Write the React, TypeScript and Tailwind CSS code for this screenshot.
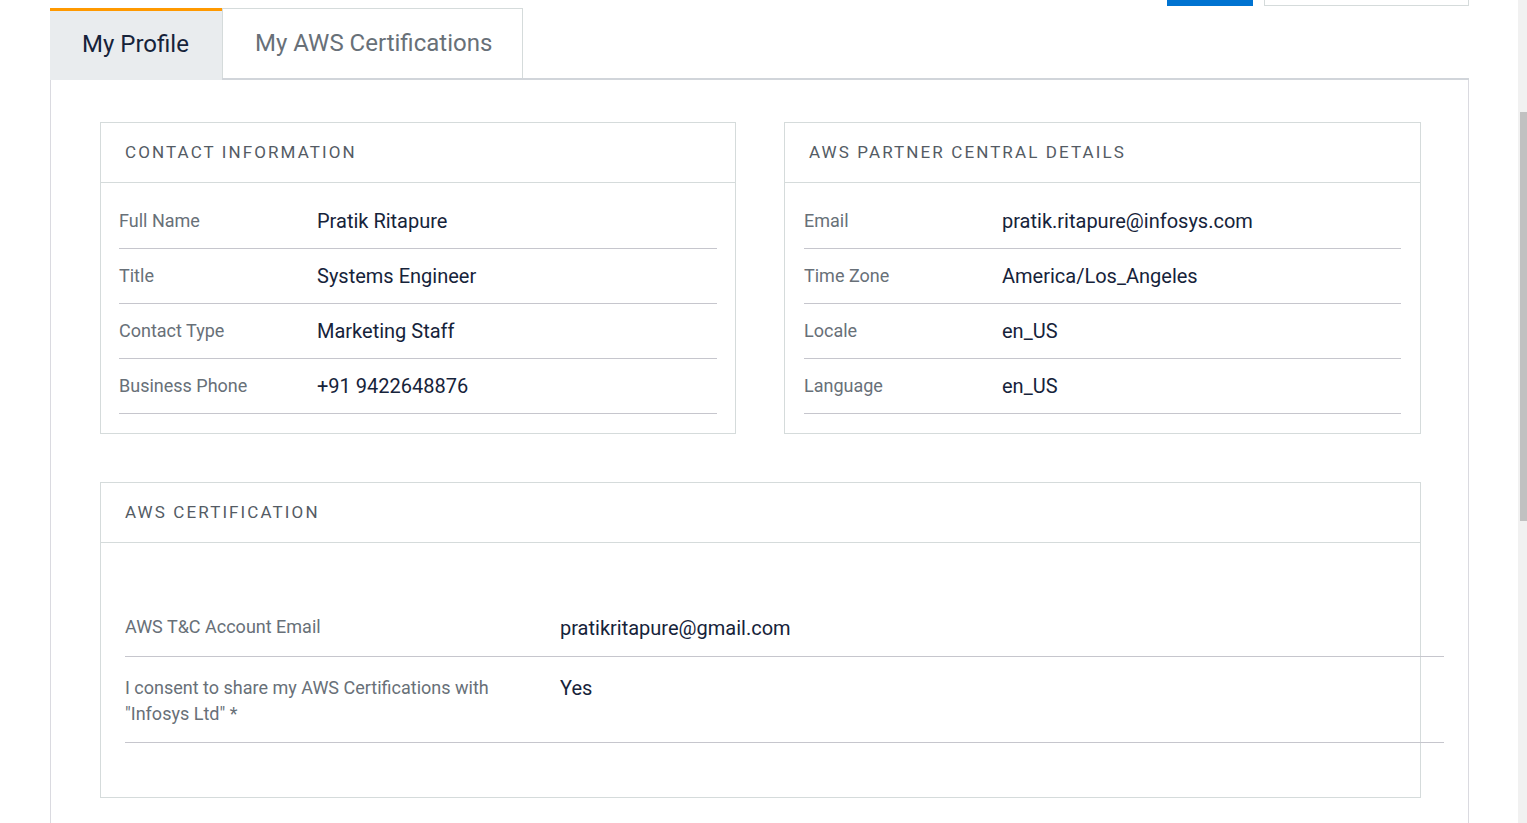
const contact = [
  ["Full Name", "Pratik Ritapure"],
  ["Title", "Systems Engineer"],
  ["Contact Type", "Marketing Staff"],
  ["Business Phone", "+91 9422648876"],
]

const partner = [
  ["Email", "pratik.ritapure@infosys.com"],
  ["Time Zone", "America/Los_Angeles"],
  ["Locale", "en_US"],
  ["Language", "en_US"],
]

const CardHeader = ({ title }: { title: string }) => (
  <div className="h-[60px] flex items-center px-6 border-b border-[#d5dbdb]">
    <span className="text-[17px] tracking-[2.1px] text-[#545b64] uppercase">{title}</span>
  </div>
)

const InfoCard = ({ title, rows, wide }: { title: string; rows: string[][]; wide?: boolean }) => (
  <div className="border border-[#d5dbdb] bg-white">
    <CardHeader title={title} />
    <div className={wide ? "px-[19px] pt-[11px] pb-[19px]" : "px-[18px] pt-[11px] pb-[19px]"}>
      {rows.map(([label, value]) => (
        <div key={label} className="h-[55px] flex items-center border-b border-[#c6c6cd]">
          <div className="w-[198px] text-[18px] text-[#687078] -mt-[2px]">{label}</div>
          <div className="text-[20px] text-[#16233a]">{value}</div>
        </div>
      ))}
    </div>
  </div>
)

export default function App() {
  return (
    <div className="flex h-[823px] overflow-hidden bg-white" style={{ fontFamily: "Roboto, 'Noto Sans', sans-serif" }}>
      <div className="flex-1 pl-[50px] pr-[49px] flex flex-col">
        {/* leftovers of the header buttons above */}
        <div className="h-[8px] flex justify-end items-start gap-[11px]">
          <div className="w-[86px] h-[6px] bg-[#0073d1]" />
          <div className="w-[205px] h-[6px] border-x border-b border-[#d5dbdb]" />
        </div>

        {/* Tabs */}
        <div className="flex h-[72px] border-b-2 border-[#d1d5da]">
          <div className="w-[172px] h-[72px] -mb-[2px] bg-[#e9ecee] border-t-[3px] border-[#ff9900] pl-8 flex items-center">
            <span className="text-[24px] text-[#16233a] -mt-[3px]">My Profile</span>
          </div>
          <div className="w-[301px] border-x border-t border-[#d5dbdb] pl-8 flex items-center">
            <span className="text-[24px] text-[#687078] -mt-[1px]">My AWS Certifications</span>
          </div>
        </div>

        {/* Panel */}
        <div className="flex-1 border-x border-[#dadae0] pl-[49px] pr-[47px] pt-[42px]">
          <div className="grid grid-cols-[636px_637px] gap-[48px]">
            <InfoCard title="Contact Information" rows={contact} />
            <InfoCard title="AWS Partner Central Details" rows={partner} wide />
          </div>

          <div className="mt-[48px] border border-[#d5dbdb]">
            <CardHeader title="AWS Certification" />
            <div className="pt-[53px] pb-[54px]">
              <div className="ml-6 w-full flex items-start pt-[19px] pb-[15px] border-b border-[#c6c6cd]">
                <div className="w-[435px] pr-[30px] text-[18px] leading-[26px] text-[#687078] -mt-[1px]">AWS T&amp;C Account Email</div>
                <div className="text-[20px] leading-[26px] text-[#16233a]">pratikritapure@gmail.com</div>
              </div>
              <div className="ml-6 w-full flex items-start pt-[18px] pb-[15px] border-b border-[#c6c6cd]">
                <div className="w-[435px] pr-[30px] text-[18px] leading-[26px] text-[#687078]">
                  I consent to share my AWS Certifications with "Infosys Ltd" *
                </div>
                <div className="text-[20px] leading-[26px] text-[#16233a]">Yes</div>
              </div>
            </div>
          </div>
        </div>
      </div>

      {/* scrollbar */}
      <div className="w-[9px] bg-[#f1f1f1] pt-[112px] pl-[2px]">
        <div className="h-[409px] bg-[#c1c1c1]" />
      </div>
    </div>
  )
}
